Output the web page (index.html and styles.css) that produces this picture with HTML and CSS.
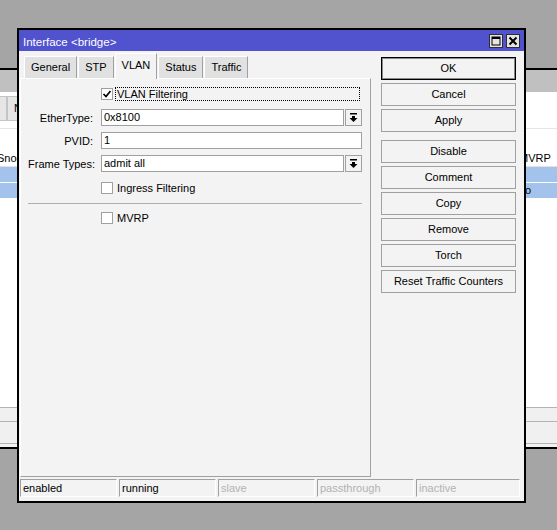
FILE: index.html
```html
<!DOCTYPE html>
<html lang="en">
<head>
    <meta charset="UTF-8">
    <title>Interface &lt;bridge&gt;</title>
    <link rel="stylesheet" href="styles.css">
</head>
<body>
<div class="desktop">
    <!-- bridge list window behind the dialog -->
    <div class="bgwin">
        <div class="bg-title"></div>
        <div class="bg-toolbar">
            <span class="bg-tool first"></span>
            <span class="bg-tool">N</span>
        </div>
        <div class="bg-filter"></div>
        <div class="bg-head"><span class="clip">Snoo</span><span></span><span>MVRP</span></div>
        <div class="bg-row"><span></span><span></span><span></span></div>
        <div class="bg-row"><span></span><span></span><span>no</span></div>
        <div class="bg-list"></div>
        <div class="bg-footer">
            <div class="band1"></div>
            <div class="band2"></div>
        </div>
    </div>

    <div class="dialog">
        <div class="titlebar">
            <span class="title">Interface &lt;bridge&gt;</span>
            <span class="tb-btn">
                <svg width="10" height="10" viewBox="0 0 10 10"><rect x="1" y="1" width="8" height="8" fill="none" stroke="#000" stroke-width="1"/><rect x="1" y="1" width="8" height="2" fill="#000"/></svg>
            </span>
            <span class="tb-btn">
                <svg width="10" height="10" viewBox="0 0 10 10"><path d="M1.5 1.5 L8.5 8.5 M8.5 1.5 L1.5 8.5" stroke="#000" stroke-width="2"/></svg>
            </span>
        </div>

        <div class="dlg-body">
            <div class="main">
                <div class="tabs">
                    <span class="tab">General</span>
                    <span class="tab">STP</span>
                    <span class="tab active">VLAN</span>
                    <span class="tab">Status</span>
                    <span class="tab">Traffic</span>
                </div>
                <div class="panel">
                    <div class="check-row first">
                        <span class="box">
                            <svg width="10" height="10" viewBox="0 0 10 10"><path d="M1.5 5 L4 7.5 L8.5 2" fill="none" stroke="#000" stroke-width="1.7"/></svg>
                        </span>
                        <span class="check-label focus">VLAN Filtering</span>
                    </div>
                    <div class="row">
                        <span class="lbl">EtherType:</span>
                        <span class="field">0x8100</span>
                        <span class="drop">
                            <svg width="9" height="10" viewBox="0 0 9 10"><rect x="1" y="0" width="7" height="1.5" fill="#000"/><rect x="3" y="3" width="3" height="2" fill="#000"/><path d="M0.5 5 L8.5 5 L4.5 9 Z" fill="#000"/></svg>
                        </span>
                    </div>
                    <div class="row">
                        <span class="lbl">PVID:</span>
                        <span class="field">1</span>
                    </div>
                    <div class="row last">
                        <span class="lbl">Frame Types:</span>
                        <span class="field">admit all</span>
                        <span class="drop">
                            <svg width="9" height="10" viewBox="0 0 9 10"><rect x="1" y="0" width="7" height="1.5" fill="#000"/><rect x="3" y="3" width="3" height="2" fill="#000"/><path d="M0.5 5 L8.5 5 L4.5 9 Z" fill="#000"/></svg>
                        </span>
                    </div>
                    <div class="check-row">
                        <span class="box"></span>
                        <span class="check-label">Ingress Filtering</span>
                    </div>
                    <div class="sep"></div>
                    <div class="check-row">
                        <span class="box"></span>
                        <span class="check-label">MVRP</span>
                    </div>
                </div>
            </div>

            <div class="actions">
                <div class="btn default">OK</div>
                <div class="btn">Cancel</div>
                <div class="btn">Apply</div>
                <div class="btn group">Disable</div>
                <div class="btn">Comment</div>
                <div class="btn">Copy</div>
                <div class="btn">Remove</div>
                <div class="btn">Torch</div>
                <div class="btn">Reset Traffic Counters</div>
            </div>
        </div>

        <div class="statusbar">
            <span class="cell">enabled</span>
            <span class="cell">running</span>
            <span class="cell off">slave</span>
            <span class="cell off">passthrough</span>
            <span class="cell off">inactive</span>
        </div>
    </div>
</div>
</body>
</html>
```

FILE: styles.css
```css
/* Basic styling */
* { margin: 0; padding: 0; box-sizing: border-box; }
body {
    font-family: "Liberation Sans", Arial, sans-serif;
    font-size: 11px;
    color: #000;
    background-color: #a5a5a5;
    width: 557px;
    height: 530px;
    overflow: hidden;
}
.desktop { position: relative; width: 557px; height: 530px; overflow: hidden; }

/* background window */
.bgwin {
    position: absolute;
    left: -12px;
    right: -12px;
    top: 68px;
    height: 381px;
    display: flex;
    flex-direction: column;
    background-color: #fff;
    border-top: 2px solid #000;
    border-bottom: 2px solid #000;
}
.bg-title { height: 22px; flex-shrink: 0; background-color: #c0c0c0; }
.bg-toolbar { height: 30px; flex-shrink: 0; display: flex; padding-top: 4px; padding-bottom: 1px; }
.bg-tool {
    height: 25px;
    line-height: 23px;
    padding: 0 6px;
    background-color: #e6e6e6;
    border: 1px solid #c4c4c4;
    white-space: nowrap;
}
.bg-tool.first { width: 19px; }
.bg-filter { height: 7px; flex-shrink: 0; border-bottom: 1px solid #e6e6e6; margin-bottom: 21px; }
.bg-head, .bg-row { display: grid; grid-template-columns: 29px 1fr 50px; padding-left: 9px; flex-shrink: 0; }
.bg-head { height: 17px; line-height: 16px; border-bottom: 1px solid #e2e2e2; }
.bg-row { height: 15px; line-height: 15px; background-color: #a3c3ec; margin-bottom: 1px; }
.clip { overflow: hidden; white-space: nowrap; }
.bg-list { flex: 1; }
.bg-footer { height: 40px; flex-shrink: 0; background-color: #f0f0f0; border-top: 1px solid #b4b4b4; }
.band1 { height: 14px; border-bottom: 1px solid #b4b4b4; }
.band2 { height: 22px; border-bottom: 1px solid #b4b4b4; }

/* dialog */
.dialog {
    position: absolute;
    left: 17px;
    top: 28px;
    width: 509px;
    height: 475px;
    border: 2px solid #000;
    background-color: #f3f3f3;
    display: flex;
    flex-direction: column;
}
.titlebar {
    height: 21px;
    flex-shrink: 0;
    display: flex;
    align-items: center;
    gap: 3px;
    padding: 0 4px;
    background-color: #5152cd;
    color: #fff;
}
.title { flex: 1; padding-top: 2px; font-size: 11.5px; }
.tb-btn {
    width: 14px;
    height: 14px;
    display: flex;
    align-items: center;
    justify-content: center;
    background-color: #e4e4e4;
    border: 1px solid #2e2e2e;
}
.dlg-body { flex: 1; min-height: 0; display: flex; padding: 2px 0 0 1px; }
.main { width: 351px; display: flex; flex-direction: column; }
.tabs { height: 25px; display: flex; align-items: flex-end; gap: 1px; padding-left: 4px; position: relative; z-index: 1; }
.tab {
    height: 22px;
    line-height: 21px;
    padding: 0 6px;
    background-color: #e1e1e1;
    border-top: 1px solid #fff;
    border-left: 1px solid #fff;
    border-right: 1px solid #a0a0a0;
}
.tab.active { height: 26px; line-height: 23px; margin-bottom: -1px; background-color: #f3f3f3; }
.panel {
    flex: 1;
    padding: 8px 8px 0 7px;
    border-top: 1px solid #fff;
    border-left: 1px solid #fff;
    border-right: 1px solid #a0a0a0;
    border-bottom: 1px solid #a0a0a0;
}

/* form rows */
.row { display: flex; align-items: center; height: 17px; margin-bottom: 6px; }
.row.last { margin-bottom: 9px; }
.lbl { width: 65px; flex-shrink: 0; margin-right: 8px; text-align: right; white-space: nowrap; }
.field {
    flex: 1;
    height: 17px;
    line-height: 15px;
    padding-left: 2px;
    background-color: #fff;
    border: 1px solid #a0a0a0;
}
.drop {
    width: 17px;
    height: 17px;
    margin-left: 1px;
    display: flex;
    align-items: center;
    justify-content: center;
    background-color: #f3f3f3;
    border: 1px solid #a0a0a0;
}
.check-row { display: flex; align-items: center; height: 14px; padding-left: 73px; }
.check-row.first { margin-bottom: 8px; }
.box {
    width: 12px;
    height: 12px;
    display: flex;
    align-items: center;
    justify-content: center;
    background-color: #fff;
    border: 1px solid #a0a0a0;
}
.check-label { margin-left: 4px; line-height: 14px; }
.check-label.focus {
    flex: 1;
    margin-left: 2px;
    margin-right: 2px;
    padding-left: 1px;
    height: 14px;
    line-height: 12px;
    border: 1px dotted #000;
}
.sep { height: 1px; margin: 8px 0 7px; background-color: #b0b0b0; }

/* buttons */
.actions { width: 135px; margin-left: 10px; padding-top: 4px; display: flex; flex-direction: column; gap: 3px; }
.btn {
    height: 23px;
    line-height: 21px;
    text-align: center;
    background-color: #f3f3f3;
    border: 1px solid #a0a0a0;
}
.btn.default { border-color: #000; box-shadow: inset 0 0 0 1px #8a8a8a; }
.btn.group { margin-top: 5px; }

/* status bar */
.statusbar { height: 18px; flex-shrink: 0; display: flex; gap: 2px; margin: 2px 4px 4px 1px; }
.cell {
    width: 97px;
    line-height: 16px;
    padding-left: 2px;
    border-top: 1px solid #a0a0a0;
    border-left: 1px solid #a0a0a0;
    border-bottom: 1px solid #fff;
    border-right: 1px solid #fff;
}
.cell:last-child { flex: 1; }
.cell.off { color: #b2b2b2; }
```
